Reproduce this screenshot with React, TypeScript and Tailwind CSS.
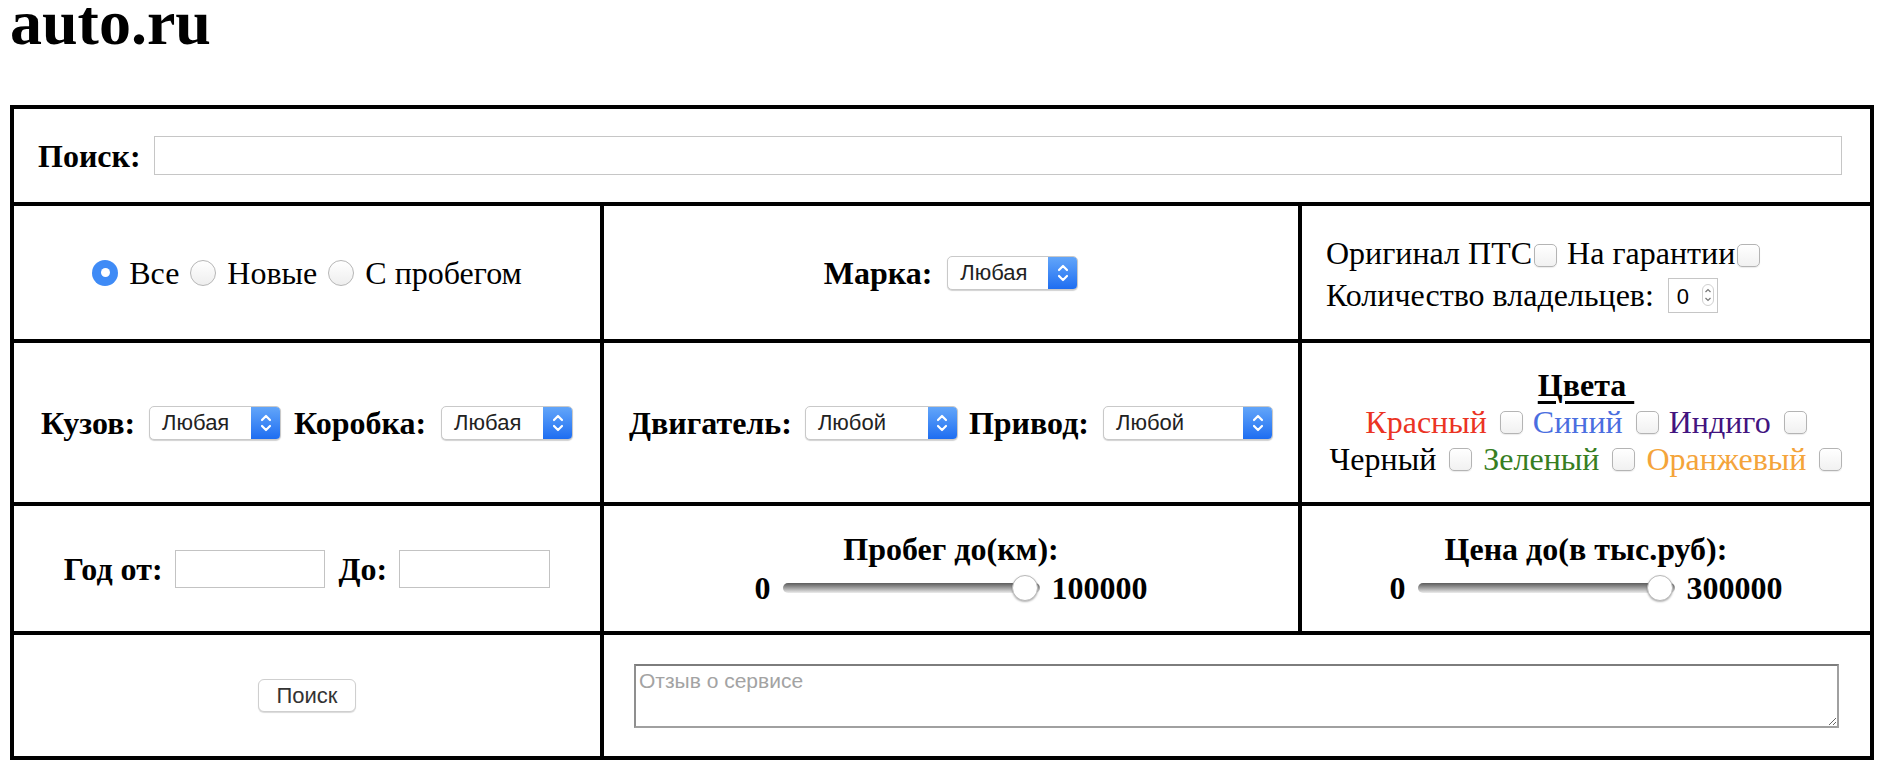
import React from 'react';

const sans = "font-['Liberation_Sans',Arial,sans-serif]";

const Chevrons = () => (
  <svg width="14" height="22" viewBox="0 0 14 22" fill="none" stroke="white" strokeWidth="2.2" strokeLinecap="round" strokeLinejoin="round">
    <path d="M3 8 L7 4 L11 8" />
    <path d="M3 14 L7 18 L11 14" />
  </svg>
);

const Select = ({ value, w }: { value: string; w: string }) => (
  <div className={`${w} h-[34px] flex rounded-[5px] border border-[#c9c9c9] bg-white shadow-[0_1px_1px_rgba(0,0,0,0.18)] overflow-hidden ${sans} text-[22px] text-[#222] leading-none`}>
    <span className="flex-1 flex items-center pl-[12px]">{value}</span>
    <span className="w-[29px] bg-gradient-to-b from-[#62a5f9] to-[#1d6df1] flex items-center justify-center">
      <Chevrons />
    </span>
  </div>
);

const Checkbox = () => (
  <span className="inline-block w-[23px] h-[23px] rounded-[5px] border border-[#b4b4b4] bg-gradient-to-b from-white to-[#f1f1f1] shadow-[0_1px_1px_rgba(0,0,0,0.08)] shrink-0" />
);

const Radio = ({ checked }: { checked?: boolean }) =>
  checked ? (
    <span className="w-[26px] h-[26px] rounded-full bg-[#3f8bf6] flex items-center justify-center shrink-0">
      <span className="w-[9px] h-[9px] rounded-full bg-white" />
    </span>
  ) : (
    <span className="w-[26px] h-[26px] rounded-full border border-[#b6b6b6] bg-gradient-to-b from-white to-[#eeeeee] shrink-0" />
  );

const Slider = () => (
  <div className="relative w-[257px] h-[26px] flex items-center">
    <div className="w-full h-[10px] rounded-full bg-gradient-to-b from-[#5c5c5c] via-[#a0a0a0] to-[#ececec]" />
    <div className="absolute right-[2px] top-0 w-[26px] h-[26px] rounded-full bg-white border border-[#b9b9b9] shadow-[0_1px_2px_rgba(0,0,0,0.3)]" />
  </div>
);

const TextBox = ({ w }: { w: string }) => (
  <div className={`${w} h-[38px] border border-[#c3c3c3] bg-white`} />
);

const Color = ({ name, color }: { name: string; color: string }) => (
  <span className="flex items-center gap-[13px]">
    <span className={color}>{name}</span>
    <Checkbox />
  </span>
);

export default function App() {
  return (
    <div className="min-h-screen bg-white text-black font-['Liberation_Serif','Times_New_Roman',serif] text-[32px]">
      <h1 className="pl-[10px] text-[64px] font-bold leading-[46px] mb-[59px]">auto.ru</h1>

      <div className="ml-[10px] w-fit grid grid-cols-[586px_694px_568px] grid-rows-[93px_133px_159px_125px_121px] gap-[4px] p-[4px] bg-black">
        {/* search row */}
        <div className="col-span-3 bg-white flex items-center pl-[24px] pr-[28px] gap-[13px]">
          <b className="leading-none">Поиск:</b>
          <div className="flex-1 h-[39px] border border-[#c6c6c6] bg-white" />
        </div>

        {/* row 2 */}
        <div className="bg-white flex items-center justify-center gap-[11px] leading-none">
          <Radio checked />
          <span>Все</span>
          <Radio />
          <span>Новые</span>
          <Radio />
          <span>С пробегом</span>
        </div>
        <div className="bg-white flex items-center justify-center gap-[15px]">
          <b className="leading-none">Марка:</b>
          <Select value="Любая" w="w-[131px]" />
        </div>
        <div className="bg-white flex flex-col justify-center pl-[24px] leading-[39px]">
          <div className="flex items-center">
            <span>Оригинал ПТС</span>
            <span className="ml-[2px] mr-[10px] mt-[6px]"><Checkbox /></span>
            <span>На гарантии</span>
            <span className="ml-[2px] mt-[6px]"><Checkbox /></span>
          </div>
          <div className="flex items-center gap-[14px]">
            <span>Количество владельцев:</span>
            <div className={`w-[50px] h-[35px] border border-[#c6c6c6] bg-white flex items-center justify-between pl-[8px] pr-[3px] ${sans} text-[22px] leading-none`}>
              <span className="mt-[3px]">0</span>
              <span className="w-[12px] h-[22px] rounded-[6px] border border-[#d0d0d0] flex flex-col items-center justify-center">
                <svg width="8" height="18" viewBox="0 0 8 18" fill="none" stroke="#777" strokeWidth="1.2">
                  <path d="M1.5 6 L4 3.5 L6.5 6" />
                  <path d="M1.5 12 L4 14.5 L6.5 12" />
                </svg>
              </span>
            </div>
          </div>
        </div>

        {/* row 3 */}
        <div className="bg-white flex items-center justify-center">
          <b className="leading-none mr-[14px]">Кузов:</b>
          <Select value="Любая" w="w-[132px]" />
          <b className="leading-none ml-[13px] mr-[15px]">Коробка:</b>
          <Select value="Любая" w="w-[132px]" />
        </div>
        <div className="bg-white flex items-center justify-center">
          <b className="leading-none mr-[13px]">Двигатель:</b>
          <Select value="Любой" w="w-[153px]" />
          <b className="leading-none ml-[11px] mr-[14px]">Привод:</b>
          <Select value="Любой" w="w-[170px]" />
        </div>
        <div className="bg-white flex flex-col items-center justify-center leading-[37px]">
          <b className="underline underline-offset-[5px] whitespace-pre">Цвета </b>
          <div className="flex items-center gap-[10px]">
            <Color name="Красный" color="text-[#eb3323]" />
            <Color name="Синий" color="text-[#4a6ee0]" />
            <Color name="Индиго" color="text-[#42147f]" />
          </div>
          <div className="flex items-center gap-[11px]">
            <Color name="Черный" color="text-black" />
            <Color name="Зеленый" color="text-[#377e22]" />
            <Color name="Оранжевый" color="text-[#f4a43a]" />
          </div>
        </div>

        {/* row 4 */}
        <div className="bg-white flex items-center justify-center">
          <b className="leading-none mr-[12px]">Год от:</b>
          <TextBox w="w-[150px]" />
          <b className="leading-none ml-[14px] mr-[12px]">До:</b>
          <TextBox w="w-[151px]" />
        </div>
        <div className="bg-white flex flex-col items-center justify-center font-bold leading-[39px]">
          <span>Пробег до(км):</span>
          <div className="flex items-center gap-[12px]">
            <span>0</span>
            <Slider />
            <span>100000</span>
          </div>
        </div>
        <div className="bg-white flex flex-col items-center justify-center font-bold leading-[39px]">
          <span>Цена до(в тыс.руб):</span>
          <div className="flex items-center gap-[12px]">
            <span>0</span>
            <Slider />
            <span>300000</span>
          </div>
        </div>

        {/* row 5 */}
        <div className="bg-white flex items-center justify-center">
          <button className={`w-[98px] h-[33px] rounded-[6px] border border-[#cfcfcf] bg-white shadow-[0_1px_1px_rgba(0,0,0,0.15)] ${sans} text-[22px] text-[#333] leading-none`}>
            Поиск
          </button>
        </div>
        <div className="col-span-2 bg-white flex items-center pl-[30px] pr-[31px]">
          <textarea
            placeholder="Отзыв о сервисе"
            className={`w-full h-[64px] border-2 border-t-[#7d7d7d] border-l-[#8f8f8f] border-r-[#a0a0a0] border-b-[#a0a0a0] px-[3px] py-[2px] ${sans} text-[21px] leading-[25px] placeholder:text-[#a3a3a3] outline-none`}
          />
        </div>
      </div>
    </div>
  );
}
